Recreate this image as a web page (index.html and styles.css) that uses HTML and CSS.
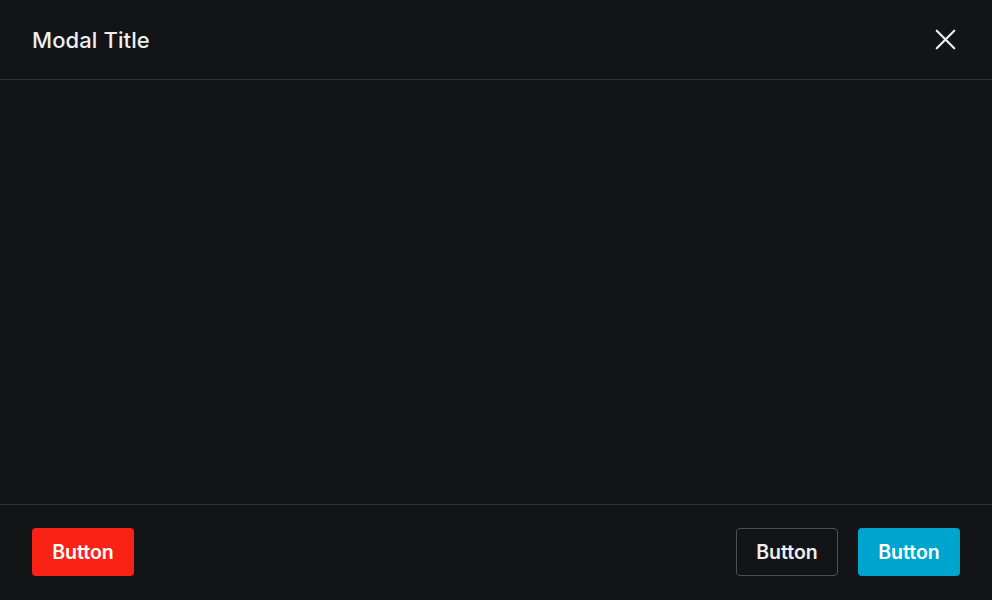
FILE: index.html
```
<!DOCTYPE html>
<html>
<head>
<meta charset="utf-8">
<link rel="stylesheet" href="styles.css">
</head>
<body>
<div class="modal">
  <header class="modal-header">
    <h1 class="modal-title">Modal Title</h1>
    <button class="close" aria-label="Close">
      <svg width="24" height="24" viewBox="0 0 24 24" fill="none" stroke="#eceef0" stroke-width="2.5" stroke-linecap="round"><path d="M2 2L22 22M22 2L2 22"/></svg>
    </button>
  </header>
  <main class="modal-body"></main>
  <footer class="modal-footer">
    <button class="btn btn-danger">Button</button>
    <div class="actions">
      <button class="btn btn-outline">Button</button>
      <button class="btn btn-primary">Button</button>
    </div>
  </footer>
</div>
</body>
</html>
```
FILE: styles.css
```
html, body {
  margin: 0;
  padding: 0;
  background: #131416;
}
body {
  font-family: Inter, "Noto Sans", sans-serif;
  color: #eceef0;
}
.modal {
  width: 992px;
  height: 600px;
  display: flex;
  flex-direction: column;
  background: #131416;
}
.modal-header {
  height: 79px;
  border-bottom: 1px solid #2f3134;
  display: flex;
  align-items: center;
  justify-content: space-between;
  padding: 0 34px 0 32px;
}
.modal-title {
  margin: 0;
  font-size: 22px;
  font-weight: 500;
  color: #eceef0;
  letter-spacing: 0.1px;
}
.close {
  background: none;
  border: 0;
  padding: 0;
  width: 24px;
  height: 24px;
  display: flex;
  cursor: pointer;
}
.close svg { width: 21px; height: 21px; margin: 1px 0 0 1px; }
.modal-body {
  flex: 1;
}
.modal-footer {
  border-top: 1px solid #2f3134;
  padding: 23px 32px 24px;
  display: flex;
  justify-content: space-between;
  align-items: center;
}
.actions {
  display: flex;
  gap: 20px;
}
.btn {
  height: 48px;
  width: 102px;
  border-radius: 4px;
  font-family: Inter, "Noto Sans", sans-serif;
  font-size: 19.5px;
  font-weight: 600;
  border: 1px solid transparent;
  color: #ffffff;
  padding: 0;
  cursor: pointer;
}
.btn-danger { background: #f82314; }
.btn-primary { background: #00a5cf; }
.btn-outline {
  background: transparent;
  border-color: #4c4f54;
  color: #eceef0;
}
```
